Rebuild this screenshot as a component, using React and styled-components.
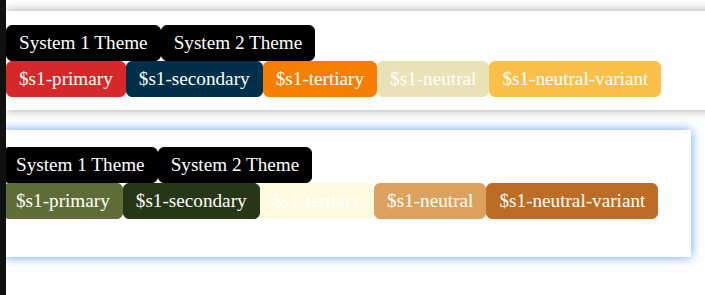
import styled, { createGlobalStyle } from 'styled-components';

const GlobalStyle = createGlobalStyle`
  html, body {
    margin: 0;
    background: #fff;
    overflow: hidden;
  }
  body {
    font-family: "Liberation Serif", "Times New Roman", serif;
  }
`;

const systems = [
  {
    shadow: '0 0 10px rgba(0, 0, 0, 0.35)',
    colors: [
      ['$s1-primary', '#d62828'],
      ['$s1-secondary', '#003049'],
      ['$s1-tertiary', '#f77f00'],
      ['$s1-neutral', '#eae2b7'],
      ['$s1-neutral-variant', '#fcbf49'],
    ],
  },
  {
    shadow: '0 0 10px rgba(70, 140, 250, 0.85)',
    colors: [
      ['$s1-primary', '#606c38'],
      ['$s1-secondary', '#283618'],
      ['$s1-tertiary', '#fefae0'],
      ['$s1-neutral', '#dda15e'],
      ['$s1-neutral-variant', '#bc6c25'],
    ],
  },
];

function App() {
  return (
    <>
      <GlobalStyle />
      <Strip />
      <Page>
        {systems.map((s, i) => (
          <Card key={i} $shadow={s.shadow} $second={i === 1}>
            <Row>
              <Chip $bg="#000">System 1 Theme</Chip>
              <Chip $bg="#000">System 2 Theme</Chip>
            </Row>
            <Row>
              {s.colors.map(([name, bg]) => (
                <Chip key={name} $bg={bg}>{name}</Chip>
              ))}
            </Row>
          </Card>
        ))}
      </Page>
    </>
  );
}

export default App;

const Strip = styled.div`
  position: fixed;
  left: 0;
  top: 0;
  width: 6px;
  height: 100vh;
  background: #111;
  z-index: 5;
`;

const Page = styled.div`
  min-height: 100vh;
  box-sizing: border-box;
  padding-top: 11px;
  display: flex;
  flex-direction: column;
  align-items: flex-start;
  gap: 20px;
`;

const Card = styled.div`
  background: #fff;
  box-shadow: ${(p) => p.$shadow};
  margin-left: ${(p) => (p.$second ? '3px' : '6px')};
  width: ${(p) => (p.$second ? '688px' : '720px')};
  padding: ${(p) => (p.$second ? '17px 0 38px' : '14px 0 13px')};
  display: flex;
  flex-direction: column;
`;

const Row = styled.div`
  display: flex;
`;

const Chip = styled.button`
  font-family: "Liberation Serif", "Times New Roman", serif;
  font-size: 19.2px;
  line-height: 22px;
  color: #fff;
  background: ${(p) => p.$bg};
  border: 1px solid ${(p) => p.$bg};
  border-radius: 6px;
  padding: 6px 12px;
  cursor: pointer;
`;
